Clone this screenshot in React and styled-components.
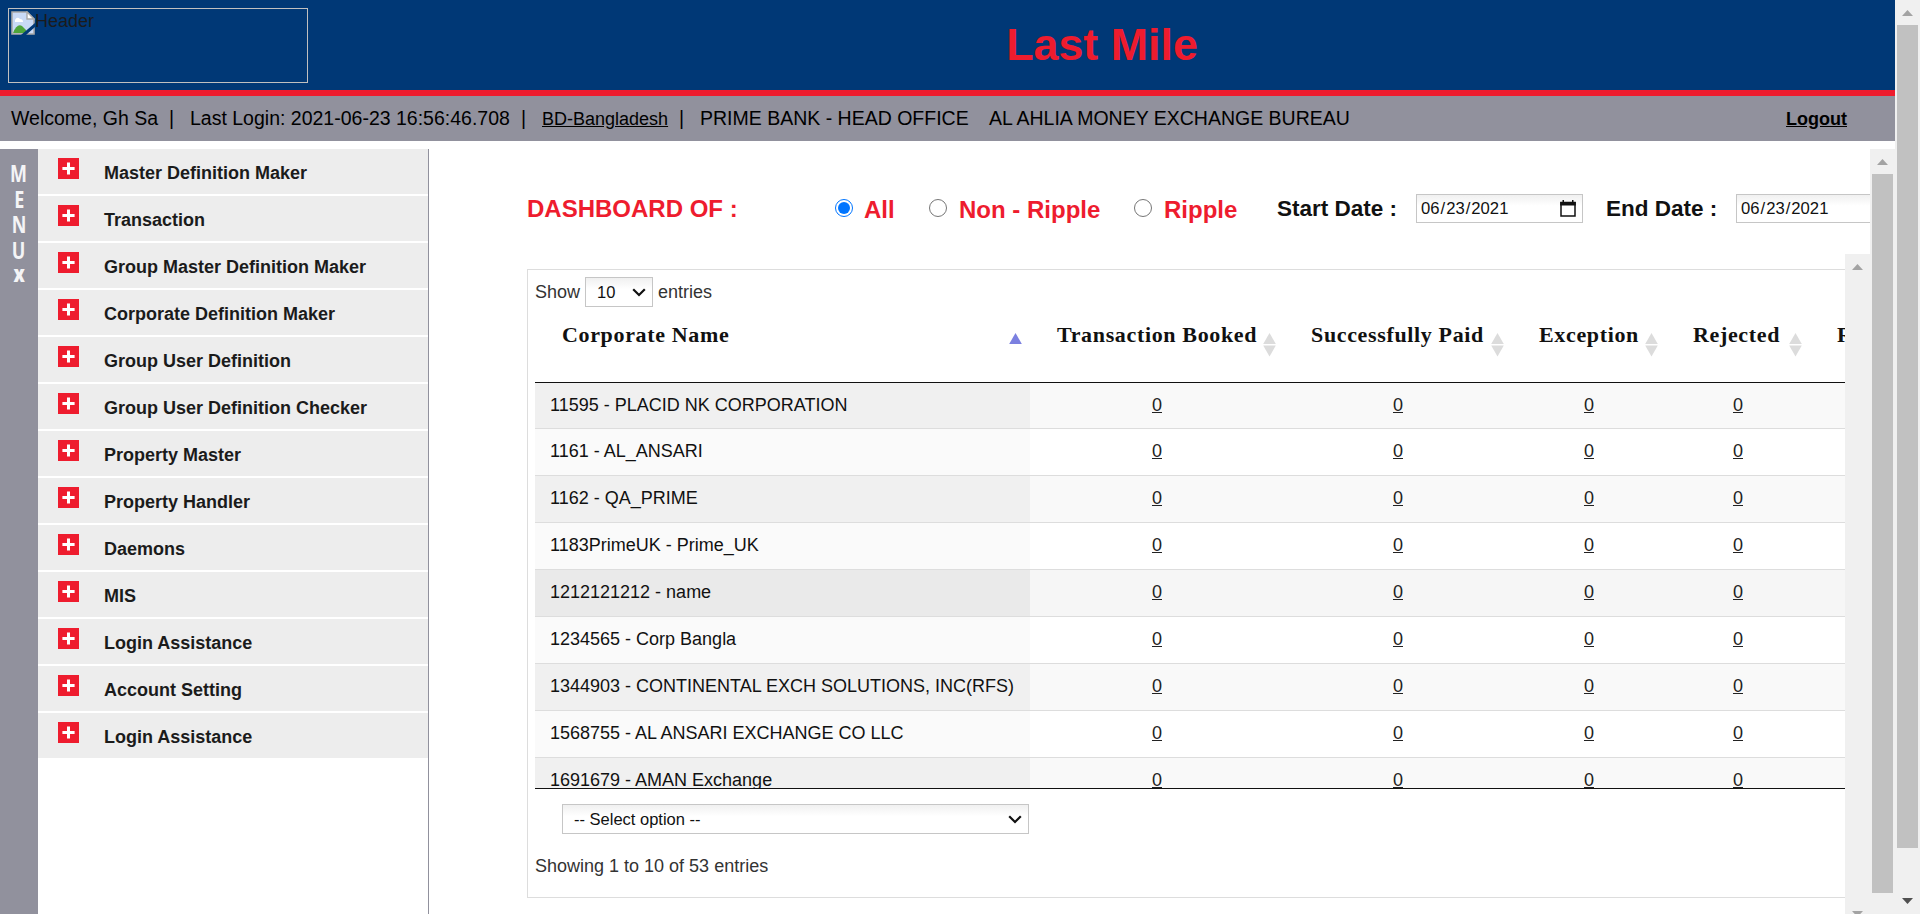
import React from "react";
import styled, { createGlobalStyle } from "styled-components";

const Global = createGlobalStyle`
  *, *::before, *::after { box-sizing: border-box; }
  html, body { margin: 0; padding: 0; overflow: hidden; background: #fff; }
  body { font-family: "Liberation Sans", Arial, sans-serif; font-size: 18px; color: #111; }
`;

const Page = styled.div`
  display: flex;
  width: 1920px;
  height: 914px;
  overflow: hidden;
`;
const Content = styled.div`
  display: flex;
  flex-direction: column;
  width: 1895px;
`;
const Header = styled.header`
  display: flex;
  height: 96px;
  padding: 8px 0 0 8px;
  background: #003876;
  border-bottom: 6px solid #ee1c2e;
`;
const BrokenImage = styled.div`
  display: flex;
  width: 300px;
  height: 75px;
  padding: 2px;
  border: 1px solid #c0c0c0;
  line-height: 21px;
  color: #1b1b1b;
`;
const Title = styled.h1`
  flex: 1;
  margin: 0;
  padding-left: 1px;
  text-align: center;
  font-size: 44.800px;
  line-height: 73px;
  color: #ee1c2e;
`;
const StatusBar = styled.div`
  display: flex;
  align-items: baseline;
  height: 45px;
  padding: 0 48px 0 11px;
  background: #91919d;
  color: #000;
  font-size: 19.500px;
  line-height: 45px;
  white-space: pre;
`;
const Status = styled.span`
  width: ${(p) => p.$w}px;
`;
const StatusLink = styled.a`
  font-size: 18px;
  text-decoration: underline;
  width: ${(p) => (p.$w ? p.$w + "px" : "auto")};
  font-weight: ${(p) => (p.$bold ? 700 : 400)};
  margin-left: ${(p) => (p.$bold ? "auto" : 0)};
`;
const Body = styled.div`
  display: flex;
  height: 765px;
  margin-top: 8px;
`;
const Strip = styled.div`
  display: flex;
  flex-direction: column;
  align-items: center;
  width: 38px;
  padding-top: 12px;
  background: #91919d;
`;
const Letter = styled.span`
  height: 25.5px;
  line-height: ${(p) => (p.$bold ? 22 : 25.5)}px;
  font-family: "Open Sans", "Noto Sans", sans-serif;
  font-size: 22.5px;
  font-weight: ${(p) => (p.$bold ? 800 : 700)};
  color: #f4f4f6;
  transform: scaleX(0.8);
`;
const Menu = styled.nav`
  display: flex;
  flex-direction: column;
  gap: 2px;
  width: 391px;
  border-right: 1px solid #91919d;
`;
const MenuItem = styled.div`
  display: flex;
  height: 45px;
  padding: 9px 0 0 20px;
  background: #ededed;
  color: #1b1b1b;
  font-weight: 700;
`;
const MenuLabel = styled.span`
  margin-left: 25px;
  line-height: 31px;
`;
const Main = styled.main`
  width: 1441px;
  height: 765px;
  padding-left: 98px;
  overflow: hidden;
`;
const FilterBar = styled.div`
  display: flex;
  width: 1600px;
  height: 105px;
  padding-top: 45px;
`;
const Heading = styled.div`
  width: 308px;
  font-size: 24px;
  font-weight: 700;
  line-height: 28px;
  padding-top: 1px;
  color: #ee1c2e;
  white-space: pre;
`;
const Option = styled.label`
  display: flex;
  width: ${(p) => p.$w}px;
  font-size: 24px;
  font-weight: 700;
  line-height: 32px;
  color: #ee1c2e;
`;
const Radio = styled.span`
  display: flex;
  align-items: center;
  justify-content: center;
  width: 18px;
  height: 18px;
  margin: 5px ${(p) => (p.$on ? 11 : 12)}px 0 0;
  border: 1.4px solid ${(p) => (p.$on ? "#0075ff" : "#767676")};
  border-radius: 50%;
  background: #fff;
  &::before {
    content: "";
    width: 12px;
    height: 12px;
    border-radius: 50%;
    background: ${(p) => (p.$on ? "#0075ff" : "#fff")};
  }
`;
const DateLabel = styled.span`
  width: ${(p) => p.$w}px;
  font-size: 22.5px;
  font-weight: 700;
  line-height: 29px;
  color: #111;
`;
const DateBox = styled.div`
  display: flex;
  justify-content: space-between;
  width: 167px;
  height: 29px;
  margin-right: 23px;
  padding: 0 6px 0 4px;
  border: 1px solid #c6c6c6;
  background: linear-gradient(#f0f0f0, #fff 40%);
  font-size: 16.67px;
  line-height: 27px;
  svg { margin-top: 5px; }
`;
const Slash = styled.span`
  padding: 0 1px;
`;
const Viewport = styled.div`
  display: flex;
  width: 1343px;
  height: 660px;
`;
const Scroller = styled.div`
  width: 1318px;
  padding-top: 15px;
  overflow: hidden;
`;
const Card = styled.section`
  width: 1500px;
  height: 629px;
  padding: 7px 0 0 7px;
  border: 1px solid #ddd;
`;
const LengthRow = styled.div`
  display: flex;
  align-items: center;
  height: 30px;
  gap: 5px;
  color: #333;
`;
const Select = styled.div`
  display: flex;
  align-items: center;
  justify-content: space-between;
  width: ${(p) => p.$w}px;
  height: 30px;
  padding: 0 6px 0 11px;
  border: 1px solid #c6c6c6;
  background: linear-gradient(#f0f0f0, #fff 40%);
  color: #111;
  font-size: 16.500px;
  line-height: 28px;
`;
const COLS = "495px 254px 228px 154px 144px 200px";
const HeadRow = styled.div`
  display: grid;
  grid-template-columns: ${COLS};
  height: 76px;
  border-bottom: 1px solid #111;
`;
const HeadCell = styled.div`
  display: flex;
  justify-content: space-between;
  padding: 14px 8px 0 27px;
  font-family: "Liberation Serif", "Times New Roman", serif;
  font-size: 22px;
  font-weight: 700;
  letter-spacing: 0.65px;
  line-height: 28px;
  white-space: nowrap;
  svg { margin-top: 12px; }
`;
const TableBody = styled.div`
  height: 406px;
  overflow: hidden;
  border-bottom: 1px solid #111;
`;
const Row = styled.div`
  display: grid;
  grid-template-columns: ${COLS};
  height: 47px;
  border-top: 1px solid #ddd;
  line-height: 44px;
  background: ${(p) => (p.$hover ? "#f6f6f6" : p.$odd ? "#f9f9f9" : "#fff")};
  &:first-child {
    height: 45px;
    border-top: 0;
  }
`;
const NameCell = styled.div`
  padding-left: 15px;
  background: ${(p) => (p.$hover ? "#eaeaea" : p.$odd ? "#f0f0f0" : "#fafafa")};
`;
const CountCell = styled.div`
  text-align: center;
  color: #222;
  text-decoration: underline;
`;
const Footer = styled.div`
  padding: 15px 0 0 27px;
`;
const Info = styled.div`
  margin-top: 22px;
  line-height: 20px;
  color: #333;
`;
const Track = styled.div`
  display: flex;
  flex-direction: column;
  align-items: center;
  flex: none;
  width: 25px;
  height: ${(p) => p.$h}px;
  padding: 10px 0;
  background: #f0f0f0;
`;
const Thumb = styled.div`
  width: 21px;
  height: ${(p) => p.$h}px;
  margin-top: 9px;
  background: #c1c1c1;
`;
const ArrowDown = styled.svg`
  margin-top: auto;
`;

const Scrollbar = ({ h, thumb, downColor }) => (
  <Track $h={h}>
    <svg width="11" height="6" viewBox="0 0 11 6"><path d="M5.5 0L11 6H0z" fill="#a3a3a3" /></svg>
    {thumb && <Thumb $h={thumb} />}
    {downColor && (
      <ArrowDown width="11" height="6" viewBox="0 0 11 6"><path d="M0 0H11L5.5 6z" fill={downColor} /></ArrowDown>
    )}
  </Track>
);

const BrokenIcon = () => (
  <svg width="24" height="24" viewBox="0 0 24 24">
    <path d="M1 1h15l7 7v15H1z" fill="#c9daf6" stroke="#a9a9a9" strokeWidth="1.6" />
    <path d="M4 9q2-4 5-1q3 0 3 3H4z" fill="#fff" />
    <path d="M2 22q4-10 9-7l4 4v3z" fill="#4fa53a" />
    <path d="M16 1v7h7z" fill="#fff" stroke="#a9a9a9" strokeWidth="1.4" />
    <path d="M10 24L24 12v4L15 24z" fill="#003876" />
  </svg>
);
const PlusIcon = () => (
  <svg width="21" height="21" viewBox="0 0 21 21">
    <path d="M0 0h21v21H0z" fill="#ee1c2e" />
    <path d="M10.5 4.4v12.2M4.4 10.5h12.2" stroke="#fff" strokeWidth="3" />
  </svg>
);
const Chevron = () => (
  <svg width="14" height="9" viewBox="0 0 14 9">
    <path d="M1.2 1.2L7 7l5.800-5.800" fill="none" stroke="#111" strokeWidth="2.2" />
  </svg>
);
const CalendarIcon = () => (
  <svg width="16" height="17" viewBox="0 0 16 17">
    <path d="M1 2.500h14v13.500H1z" fill="none" stroke="#111" strokeWidth="1.500" />
    <path d="M.2 2h15.600v3.500H.2zM2.500 0h1.500v3h-1.500zM12 0h1.500v3h-1.500z" fill="#111" />
  </svg>
);
const SortIcon = ({ asc }) => (
  <svg width="13" height="24" viewBox="0 0 13 24">
    <path d="M6.500 0L12.800 11H.2z" fill={asc ? "#7b80e0" : "#dcdcdc"} />
    {!asc && <path d="M.2 12.500h12.600L6.500 23.500z" fill="#dcdcdc" />}
  </svg>
);

const DateField = () => (
  <DateBox>
    <span>06<Slash>/</Slash>23<Slash>/</Slash>2021</span>
    <CalendarIcon />
  </DateBox>
);

const MENU = [
  "Master Definition Maker", "Transaction", "Group Master Definition Maker",
  "Corporate Definition Maker", "Group User Definition", "Group User Definition Checker",
  "Property Master", "Property Handler", "Daemons", "MIS", "Login Assistance",
  "Account Setting", "Login Assistance",
];
const HEADS = ["Corporate Name", "Transaction Booked", "Successfully Paid", "Exception", "Rejected", "Refund"];
const ROWS = [
  "11595 - PLACID NK CORPORATION", "1161 - AL_ANSARI", "1162 - QA_PRIME",
  "1183PrimeUK - Prime_UK", "1212121212 - name", "1234565 - Corp Bangla",
  "1344903 - CONTINENTAL EXCH SOLUTIONS, INC(RFS)", "1568755 - AL ANSARI EXCHANGE CO LLC",
  "1691679 - AMAN Exchange",
];

export default function App() {
  return (
    <Page>
      <Global />
      <Content>
        <Header>
          <BrokenImage><BrokenIcon />Header</BrokenImage>
          <Title>Last Mile</Title>
        </Header>
        <StatusBar>
          <Status $w={158}>Welcome, Gh Sa</Status>
          <Status $w={21}>|</Status>
          <Status $w={331}>Last Login: 2021-06-23 16:56:46.708</Status>
          <Status $w={21}>|</Status>
          <StatusLink $w={137}>BD-Bangladesh</StatusLink>
          <Status $w={21}>|</Status>
          <Status $w={289}>PRIME BANK - HEAD OFFICE</Status>
          <Status $w={370}>AL AHLIA MONEY EXCHANGE BUREAU</Status>
          <StatusLink $bold>Logout</StatusLink>
        </StatusBar>
        <Body>
          <Strip>
            {["M", "E", "N", "U"].map((c) => <Letter key={c}>{c}</Letter>)}
            <Letter $bold>x</Letter>
          </Strip>
          <Menu>
            {MENU.map((m, i) => (
              <MenuItem key={i}><PlusIcon /><MenuLabel>{m}</MenuLabel></MenuItem>
            ))}
          </Menu>
          <Main>
            <FilterBar>
              <Heading>DASHBOARD OF :</Heading>
              <Option $w={94}><Radio $on />All</Option>
              <Option $w={205}><Radio />Non - Ripple</Option>
              <Option $w={143}><Radio />Ripple</Option>
              <DateLabel $w={139}>Start Date :</DateLabel>
              <DateField />
              <DateLabel $w={130}>End Date :</DateLabel>
              <DateField />
            </FilterBar>
            <Viewport>
              <Scroller>
                <Card>
                  <LengthRow>
                    Show
                    <Select $w={68}>10<Chevron /></Select>
                    entries
                  </LengthRow>
                  <HeadRow>
                    {HEADS.map((h, i) => (
                      <HeadCell key={h}>{h}<SortIcon asc={i === 0} /></HeadCell>
                    ))}
                  </HeadRow>
                  <TableBody>
                    {ROWS.map((r, i) => (
                      <Row key={r} $odd={i % 2 === 0} $hover={i === 4}>
                        <NameCell $odd={i % 2 === 0} $hover={i === 4}>{r}</NameCell>
                        {[0, 0, 0, 0].map((n, j) => <CountCell key={j}>{n}</CountCell>)}
                      </Row>
                    ))}
                  </TableBody>
                  <Footer>
                    <Select $w={467}>-- Select option --<Chevron /></Select>
                  </Footer>
                  <Info>Showing 1 to 10 of 53 entries</Info>
                </Card>
              </Scroller>
              <Scrollbar h={673} downColor="#a3a3a3" />
            </Viewport>
          </Main>
          <Scrollbar h={765} thumb={719} />
        </Body>
      </Content>
      <Scrollbar h={914} thumb={823} downColor="#505050" />
    </Page>
  );
}
